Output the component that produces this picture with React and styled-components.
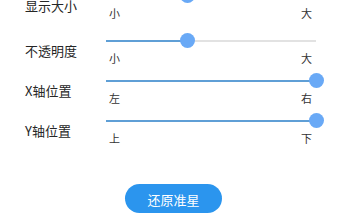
import React from "react";
import styled, { createGlobalStyle } from "styled-components";

const Global = createGlobalStyle`
  html, body { margin: 0; padding: 0; background: #fff; overflow: hidden; }
  body { font-family: "Noto Sans CJK SC", "Noto Sans", sans-serif; }
`;

const Page = styled.div`
  width: 337px;
  height: 224px;
  overflow: hidden;
  background: #fff;
`;

const List = styled.div`
  display: flex;
  flex-direction: column;
  margin-top: -16px;
`;

const Row = styled.div`
  display: flex;
  align-items: center;
  height: 40px;
  margin-bottom: ${(p) => p.$after || 0}px;
`;

const Label = styled.div`
  width: 106px;
  flex: none;
  padding-left: 25px;
  box-sizing: border-box;
  font-size: 13px;
  color: #262626;
  line-height: 16px;
  margin-top: 3px;
`;

const SliderCol = styled.div`
  width: 210px;
  display: flex;
  flex-direction: column;
`;

const TrackArea = styled.div`
  position: relative;
  height: 16px;
`;

const Rail = styled.div`
  position: absolute;
  left: 0;
  right: 0;
  top: 7px;
  height: 2px;
  background: #e2e2e2;
`;

const Fill = styled.div`
  position: absolute;
  left: 0;
  top: 7px;
  height: 2px;
  background: #5f9fd6;
`;

const Thumb = styled.div`
  position: absolute;
  top: 0;
  width: 15px;
  height: 15px;
  margin-left: -7.5px;
  border-radius: 50%;
  background: #69a9f6;
`;

const Ends = styled.div`
  display: flex;
  justify-content: space-between;
  padding: 1px 4px 0 3px;
  font-size: 11px;
  line-height: 16px;
  color: #333;
`;

const ButtonRow = styled.div`
  display: flex;
  padding-left: 125px;
  margin-top: 35px;
`;

const Button = styled.button`
  width: 97px;
  height: 29px;
  border: none;
  border-radius: 15px;
  background: #2b95ee;
  color: #fff;
  font-family: "Noto Sans CJK SC", "Noto Sans", sans-serif;
  font-size: 13px;
  padding: 0;
  padding-top: 1px;
`;

function Slider({ value, min, max }) {
  return (
    <SliderCol>
      <TrackArea>
        <Rail />
        <Fill style={{ width: `${value}%` }} />
        <Thumb style={{ left: `${value}%` }} />
      </TrackArea>
      <Ends>
        <span>{min}</span>
        <span>{max}</span>
      </Ends>
    </SliderCol>
  );
}

const rows = [
  { label: "显示大小", value: 39, min: "小", max: "大", after: 5 },
  { label: "不透明度", value: 39, min: "小", max: "大" },
  { label: "X轴位置", value: 100, min: "左", max: "右" },
  { label: "Y轴位置", value: 100, min: "上", max: "下" },
];

export default function App() {
  return (
    <Page>
      <Global />
      <List>
        {rows.map((r) => (
          <Row key={r.label} $after={r.after}>
            <Label>{r.label}</Label>
            <Slider value={r.value} min={r.min} max={r.max} />
          </Row>
        ))}
      </List>
      <ButtonRow>
        <Button>还原准星</Button>
      </ButtonRow>
    </Page>
  );
}
